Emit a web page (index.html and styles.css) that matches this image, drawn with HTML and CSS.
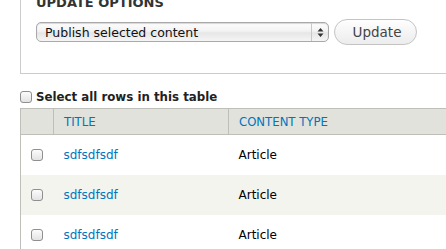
FILE: index.html
```html
<!DOCTYPE html>
<html>
<head>
<meta charset="utf-8">
<link rel="stylesheet" href="styles.css">
</head>
<body>
<div class="page">
  <div class="fieldset">
    <div class="legend">Update options</div>
    <div class="controls">
      <div class="select">
        <span class="select-text">Publish selected content</span>
        <span class="select-arrows">
          <svg width="7" height="11" viewBox="0 0 7 11"><path d="M3.5 1 L6.5 4.5 L0.5 4.5 Z M3.5 10 L6.5 6.5 L0.5 6.5 Z" fill="#333"/></svg>
        </span>
      </div>
      <button class="btn" type="button">Update</button>
    </div>
  </div>
  <label class="select-all"><input type="checkbox" class="cb"><span>Select all rows in this table</span></label>
  <table class="grid">
    <thead>
      <tr><th class="c-check"></th><th class="c-title">Title</th><th class="c-type">Content type</th></tr>
    </thead>
    <tbody>
      <tr><td class="c-check"><input type="checkbox" class="cb"></td><td><a href="#">sdfsdfsdf</a></td><td>Article</td></tr>
      <tr class="even"><td class="c-check"><input type="checkbox" class="cb"></td><td><a href="#">sdfsdfsdf</a></td><td>Article</td></tr>
      <tr><td class="c-check"><input type="checkbox" class="cb"></td><td><a href="#">sdfsdfsdf</a></td><td>Article</td></tr>
    </tbody>
  </table>
</div>
</body>
</html>
```
FILE: styles.css
```css
html, body {
  margin: 0;
  padding: 0;
  background: #fff;
  overflow: hidden;
}
body {
  font-family: "DejaVu Sans", "Lucida Grande", sans-serif;
  font-size: 12px;
  color: #000;
  width: 446px;
  height: 249px;
}
.page {
  margin-top: -20px;
  padding-left: 20px;
}
.fieldset {
  border: 1px solid #ccc;
  border-right: 0;
  padding: 0 0 28px 15px;
}
.legend {
  margin-top: 14px;
  font-weight: bold;
  font-size: 13px;
  line-height: 16px;
  text-transform: uppercase;
  color: #333;
}
.controls {
  margin-top: 8px;
  display: flex;
  align-items: center;
  height: 26px;
}
.select {
  box-sizing: border-box;
  width: 293px;
  height: 20px;
  border: 1px solid #a9a9a9;
  border-radius: 5px;
  background: linear-gradient(#fdfdfd, #f3f3f3 45%, #e6e6e6 55%, #f5f5f5);
  display: flex;
  align-items: center;
  box-shadow: inset 0 1px 1px rgba(0,0,0,0.15);
}
.select-text {
  flex: 1;
  padding-left: 8px;
  font-size: 12.5px;
  color: #111;
}
.select-arrows {
  width: 16px;
  height: 18px;
  border-left: 1px solid #c8c8c8;
  display: flex;
  align-items: center;
  justify-content: center;
}
.btn {
  margin-left: 5px;
  box-sizing: border-box;
  width: 83px;
  height: 26px;
  border: 1px solid #c4c4c4;
  border-radius: 13px;
  background: linear-gradient(#fefefe, #ececec);
  font-family: inherit;
  font-size: 13.5px;
  color: #444;
  padding: 0 0 0 3px;
}
.cb {
  -webkit-appearance: none;
  appearance: none;
  box-sizing: border-box;
  width: 12px;
  height: 12px;
  margin: 0;
  border: 1px solid #8f8f8f;
  border-radius: 3px;
  background: linear-gradient(#fcfcfc, #e3e3e3);
  display: block;
}
.select-all {
  margin-top: 16px;
  display: flex;
  align-items: center;
  height: 14px;
  font-weight: bold;
  font-size: 11.8px;
  color: #222;
}
.select-all .cb {
  margin-right: 4px;
}
.grid {
  margin-top: 4px;
  border-collapse: collapse;
  width: 460px;
  border-left: 1px solid #bebfb9;
}
.grid th {
  background: #e1e2dc;
  border-top: 1px solid #bebfb9;
  border-bottom: 1px solid #bebfb9;
  border-left: 1px solid #bebfb9;
  height: 25px;
  padding: 0 0 0 10px;
  text-align: left;
  font-weight: normal;
  text-transform: uppercase;
  color: #0074bd;
  font-size: 11.7px;
}
.grid th:first-child { border-left: 0; }
.grid td {
  height: 40px;
  padding: 0 0 0 10px;
  font-size: 12px;
}
.grid .c-check { width: 22px; }
.grid .c-title { width: 164px; }
.grid tr.even td { background: #f3f4ee; }
.grid a {
  color: #0074bd;
  text-decoration: none;
}
```
